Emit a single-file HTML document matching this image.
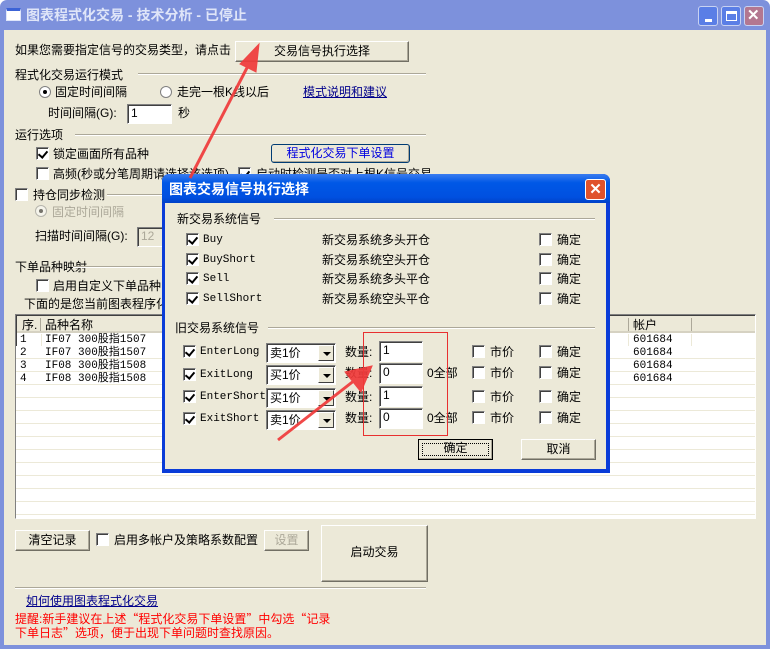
<!DOCTYPE html>
<html><head><meta charset="utf-8"><style>
*{margin:0;padding:0;box-sizing:border-box}
body{width:770px;height:649px;overflow:hidden;background:#fff;font-family:"Liberation Sans","Noto Sans CJK SC","WenQuanYi Zen Hei",sans-serif;font-size:12px;color:#000;position:relative}
.a{position:absolute;white-space:nowrap;line-height:14px}
.q{font-family:"Noto Sans CJK SC",sans-serif}
#win{position:absolute;left:0;top:0;width:770px;height:649px;background:#7d91dc;border-radius:7px 7px 0 0}
#body{position:absolute;left:4px;top:30px;width:762px;height:615px;background:#ece9d8}
.sep{position:absolute;height:2px;border-top:1px solid #aca899;border-bottom:1px solid #fff}
.btn{position:absolute;background:#ece9d8;border:1px solid;border-color:#fff #716f64 #716f64 #fff;box-shadow:inset -1px -1px 0 #aca899;text-align:center;line-height:18px}
.cb{position:absolute;width:13px;height:13px;background:#fff;border:1px solid;border-color:#808080 #fff #fff #808080;box-shadow:inset 1px 1px 0 #404040}
.cb.k::after{content:"";position:absolute;left:3px;top:1px;width:4px;height:7px;border:solid #000;border-width:0 2px 2px 0;transform:rotate(40deg)}
.rd{position:absolute;width:12px;height:12px;border-radius:50%;background:#fff;border:1px solid #808080}
.rd.k::after{content:"";position:absolute;left:3px;top:3px;width:4px;height:4px;border-radius:50%;background:#000}
.in{position:absolute;background:#fff;border:1px solid;border-color:#808080 #fff #fff #808080;box-shadow:inset 1px 1px 0 #404040;padding-left:3px;line-height:17px}
.mono{font-family:"Liberation Mono","DejaVu Sans Mono",monospace;font-size:11px}
.tb{position:absolute;top:6px;width:20px;height:20px;border:1px solid #c8d2f2;border-radius:3px;background:#5a7ee6}
.cmb{position:absolute;width:70px;height:20px;background:#fff;border:1px solid;border-color:#808080 #fff #fff #808080;box-shadow:inset 1px 1px 0 #404040;padding-left:3px;line-height:18px}
.cmb i{position:absolute;right:1px;top:1px;width:16px;height:16px;background:#ece9d8;border:1px solid;border-color:#fff #404040 #404040 #fff}
.cmb i::after{content:"";position:absolute;left:4px;top:6px;border:4px solid transparent;border-top:4px solid #000;border-bottom:0}
.gl{position:absolute;background:#ece9d8}
</style></head><body>
<div id="win">
<div class="a" style="left:6px;top:8px;width:15px;height:13px;background:#fff;border:1px solid #dfe6fb;border-top:3px solid #3c63d6"></div>
<div class="a" style="left:26px;top:7px;color:#dfe5f8;font-weight:bold;font-size:14px;line-height:16px">图表程式化交易 - 技术分析 - 已停止</div>
<div class="tb" style="left:698px"><div style="position:absolute;left:6px;top:12px;width:7px;height:3px;background:#fff"></div></div>
<div class="tb" style="left:721px"><div style="position:absolute;left:4px;top:4px;width:11px;height:10px;border:1px solid #fff;border-top:3px solid #fff"></div></div>
<div class="tb" style="left:744px;background:#b37790"><div style="position:absolute;left:2px;top:-1px;color:#fff;font-size:15px;font-weight:bold">✕</div></div>
<div id="body"></div>
</div>

<div class="a" style="left:15px;top:43px">如果您需要指定信号的交易类型，请点击</div>
<div class="btn" style="left:235px;top:41px;width:174px;height:21px">交易信号执行选择</div>
<div class="a" style="left:15px;top:68px">程式化交易运行模式</div>
<div class="sep" style="left:138px;top:73px;width:288px"></div>
<div class="rd k" style="left:39px;top:86px"></div><div class="a" style="left:55px;top:85px">固定时间间隔</div>
<div class="rd" style="left:160px;top:86px"></div><div class="a" style="left:177px;top:85px">走完一根K线以后</div>
<div class="a" style="left:303px;top:85px;color:#00008b;text-decoration:underline">模式说明和建议</div>
<div class="a" style="left:48px;top:106px">时间间隔(G):</div>
<div class="in" style="left:127px;top:104px;width:45px;height:20px">1</div>
<div class="a" style="left:178px;top:106px">秒</div>
<div class="a" style="left:15px;top:128px">运行选项</div>
<div class="sep" style="left:75px;top:134px;width:351px"></div>
<div class="cb k" style="left:36px;top:147px"></div><div class="a" style="left:53px;top:147px">锁定画面所有品种</div>
<div class="btn" style="left:271px;top:144px;width:139px;height:19px;border:1px solid #003c74;border-radius:3px;color:#0000e0;line-height:16px">程式化交易下单设置</div>
<div class="cb" style="left:36px;top:167px"></div><div class="a" style="left:53px;top:167px">高频(秒或分笔周期请选择该选项)</div>
<div class="cb k" style="left:238px;top:167px"></div><div class="a" style="left:256px;top:167px">启动时检测是否对上根K信号交易</div>
<div class="cb" style="left:15px;top:188px"></div><div class="a" style="left:33px;top:188px">持仓同步检测</div>
<div class="sep" style="left:107px;top:194px;width:60px"></div>
<div class="rd k" style="left:35px;top:205px;opacity:.5"></div><div class="a" style="left:52px;top:205px;color:#aca899">固定时间间隔</div>
<div class="a" style="left:35px;top:229px">扫描时间间隔(G):</div>
<div class="in" style="left:137px;top:227px;width:30px;height:20px;background:#ece9d8;color:#aca899">12</div>
<div class="a" style="left:15px;top:260px">下单品种映射</div>
<div class="sep" style="left:73px;top:266px;width:94px"></div>
<div class="cb" style="left:36px;top:279px"></div><div class="a" style="left:53px;top:279px">启用自定义下单品种</div>
<div class="a" style="left:24px;top:297px">下面的是您当前图表程序化</div>

<div style="position:absolute;left:15px;top:314px;width:741px;height:205px;background:#fff;border:1px solid;border-color:#808080 #fff #fff #808080;box-shadow:inset 1px 1px 0 #404040;overflow:hidden">
<div style="position:absolute;left:1px;top:1px;width:740px;height:17px;background:#ece9d8;border-bottom:2px solid #d6d2c2"></div>
<div class="a" style="left:6px;top:3px">序.</div><div class="a" style="left:29px;top:3px">品种名称</div><div class="a" style="left:617px;top:3px">帐户</div>
<div class="gl" style="left:24px;top:3px;width:1px;height:13px;background:#aca899"></div>
<div class="gl" style="left:612px;top:3px;width:1px;height:13px;background:#aca899"></div>
<div class="gl" style="left:675px;top:3px;width:1px;height:13px;background:#aca899"></div>
<div class="gl" style="left:25px;top:19px;width:1px;height:190px"></div>
<div class="gl" style="left:153px;top:19px;width:1px;height:190px"></div>
<div class="gl" style="left:253px;top:19px;width:1px;height:190px"></div>
<div class="gl" style="left:380px;top:19px;width:1px;height:190px"></div>
<div class="gl" style="left:548px;top:19px;width:1px;height:190px"></div>
<div class="gl" style="left:612px;top:19px;width:1px;height:190px"></div>
<div class="gl" style="left:675px;top:19px;width:1px;height:190px"></div>
<div style="position:absolute;left:0;top:31px;width:741px;height:180px;background:repeating-linear-gradient(#fff 0 12px,#ece9d8 12px 13px)"></div>
<div class="a mono" style="left:4px;top:19px;line-height:13px">1<br>2<br>3<br>4</div>
<div class="a mono" style="left:29px;top:19px;line-height:13px">IF07 300股指1507<br>IF07 300股指1507<br>IF08 300股指1508<br>IF08 300股指1508</div>
<div class="a mono" style="left:617px;top:19px;line-height:13px">601684<br>601684<br>601684<br>601684</div>
</div>

<div class="btn" style="left:15px;top:530px;width:75px;height:21px">清空记录</div>
<div class="cb" style="left:96px;top:533px"></div><div class="a" style="left:114px;top:533px">启用多帐户及策略系数配置</div>
<div class="btn" style="left:264px;top:530px;width:45px;height:21px;color:#aca899">设置</div>
<div class="btn" style="left:321px;top:525px;width:107px;height:57px;line-height:53px">启动交易</div>
<div class="sep" style="left:15px;top:587px;width:411px"></div>
<div class="a" style="left:26px;top:594px;color:#00008b;text-decoration:underline">如何使用图表程式化交易</div>
<div class="a" style="left:15px;top:612px;color:#f00;line-height:13px">提醒:新手建议在上述<span class="q">“</span>程式化交易下单设置<span class="q">”</span>中勾选<span class="q">“</span>记录<br>下单日志<span class="q">”</span>选项，便于出现下单问题时查找原因。</div>

<!-- dialog -->
<div style="position:absolute;left:162px;top:174px;width:448px;height:299px;background:#0a3cd8;border-radius:7px 7px 0 0">
<div style="position:absolute;left:0;top:0;width:448px;height:29px;border-radius:7px 7px 0 0;background:linear-gradient(#3a7cf0,#0058e6 30%,#0050e0 80%,#0040c8)"></div>
<div class="a" style="left:7px;top:7px;color:#fff;font-weight:bold;font-size:14px;line-height:16px">图表交易信号执行选择</div>
<div style="position:absolute;left:423px;top:5px;width:21px;height:21px;border:1px solid #fff;border-radius:3px;background:#e0522c;color:#fff;font-weight:bold;font-size:15px;text-align:center;line-height:19px">✕</div>
<div style="position:absolute;left:3px;top:29px;width:441px;height:266px;background:#ece9d8"></div>
</div>
<div class="a" style="left:177px;top:212px">新交易系统信号</div>
<div class="sep" style="left:274px;top:218px;width:321px"></div>
<div class="cb k" style="left:186px;top:233px"></div><div class="a mono" style="left:203px;top:233px">Buy</div><div class="a" style="left:322px;top:233px">新交易系统多头开仓</div><div class="cb" style="left:539px;top:233px"></div><div class="a" style="left:557px;top:233px">确定</div>
<div class="cb k" style="left:186px;top:253px"></div><div class="a mono" style="left:203px;top:253px">BuyShort</div><div class="a" style="left:322px;top:253px">新交易系统空头开仓</div><div class="cb" style="left:539px;top:253px"></div><div class="a" style="left:557px;top:253px">确定</div>
<div class="cb k" style="left:186px;top:272px"></div><div class="a mono" style="left:203px;top:272px">Sell</div><div class="a" style="left:322px;top:272px">新交易系统多头平仓</div><div class="cb" style="left:539px;top:272px"></div><div class="a" style="left:557px;top:272px">确定</div>
<div class="cb k" style="left:186px;top:292px"></div><div class="a mono" style="left:203px;top:292px">SellShort</div><div class="a" style="left:322px;top:292px">新交易系统空头平仓</div><div class="cb" style="left:539px;top:292px"></div><div class="a" style="left:557px;top:292px">确定</div>
<div class="a" style="left:175px;top:321px">旧交易系统信号</div>
<div class="sep" style="left:268px;top:327px;width:327px"></div>

<div class="cb k" style="left:183px;top:345px"></div><div class="a mono" style="left:200px;top:345px">EnterLong</div><div class="cmb" style="left:266px;top:343px">卖1价<i></i></div><div class="a" style="left:345px;top:345px">数量:</div><div class="in" style="left:379px;top:341px;width:44px;height:21px">1</div><div class="cb" style="left:472px;top:345px"></div><div class="a" style="left:490px;top:345px">市价</div><div class="cb" style="left:539px;top:345px"></div><div class="a" style="left:557px;top:345px">确定</div>
<div class="cb k" style="left:183px;top:368px"></div><div class="a mono" style="left:200px;top:368px">ExitLong</div><div class="cmb" style="left:266px;top:365px">买1价<i></i></div><div class="a" style="left:345px;top:366px">数量:</div><div class="in" style="left:379px;top:363px;width:44px;height:21px">0</div><div class="a" style="left:427px;top:366px">0全部</div><div class="cb" style="left:472px;top:366px"></div><div class="a" style="left:490px;top:366px">市价</div><div class="cb" style="left:539px;top:366px"></div><div class="a" style="left:557px;top:366px">确定</div>
<div class="cb k" style="left:183px;top:390px"></div><div class="a mono" style="left:200px;top:390px">EnterShort</div><div class="cmb" style="left:266px;top:388px">买1价<i></i></div><div class="a" style="left:345px;top:390px">数量:</div><div class="in" style="left:379px;top:386px;width:44px;height:21px">1</div><div class="cb" style="left:472px;top:390px"></div><div class="a" style="left:490px;top:390px">市价</div><div class="cb" style="left:539px;top:390px"></div><div class="a" style="left:557px;top:390px">确定</div>
<div class="cb k" style="left:183px;top:412px"></div><div class="a mono" style="left:200px;top:412px">ExitShort</div><div class="cmb" style="left:266px;top:410px">卖1价<i></i></div><div class="a" style="left:345px;top:411px">数量:</div><div class="in" style="left:379px;top:408px;width:44px;height:21px">0</div><div class="a" style="left:427px;top:411px">0全部</div><div class="cb" style="left:472px;top:411px"></div><div class="a" style="left:490px;top:411px">市价</div><div class="cb" style="left:539px;top:411px"></div><div class="a" style="left:557px;top:411px">确定</div>
<div style="position:absolute;left:363px;top:332px;width:85px;height:104px;border:1px solid #e83030"></div>
<div class="btn" style="left:418px;top:439px;width:75px;height:21px;border:1px solid #000;line-height:17px"><div style="position:absolute;left:3px;top:3px;right:3px;bottom:3px;border:1px dotted #000"></div>确定</div>
<div class="btn" style="left:521px;top:439px;width:75px;height:21px">取消</div>

<svg style="position:absolute;left:0;top:0" width="770" height="649">
<g fill="#f03a3a" stroke="#f03a3a" opacity="0.92">
<line x1="190" y1="178" x2="250" y2="62" stroke-width="3"/>
<polygon points="259,44 256,72 240,64" stroke-width="1"/>
<line x1="278" y1="440" x2="355" y2="380" stroke-width="3"/>
<polygon points="372,366 361,392 345,372" stroke-width="1"/>
</g>
</svg>
</body></html>
